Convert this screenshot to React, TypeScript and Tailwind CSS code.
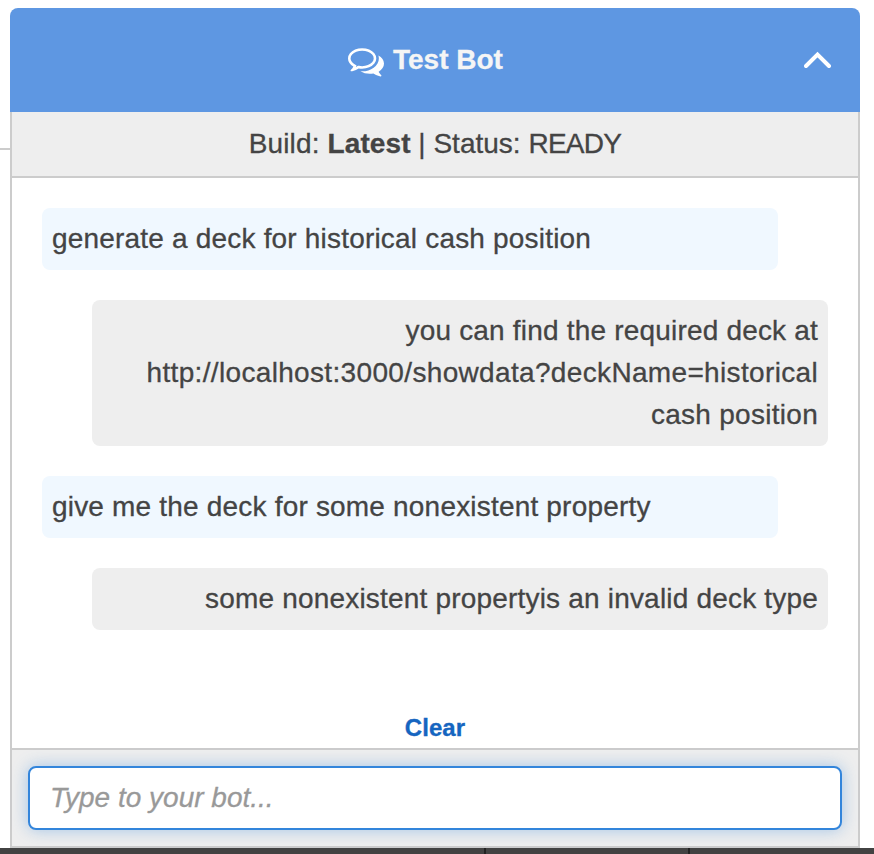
type MessageProps = { from: "user" | "bot"; children: React.ReactNode };

function Message({ from, children }: MessageProps) {
  return from === "user" ? (
    <div className="mr-[50px] rounded-lg bg-[#f0f8ff] p-2.5 tracking-[0.19px]">{children}</div>
  ) : (
    <div className="ml-[50px] rounded-lg bg-[#eeeeee] p-2.5 text-right tracking-[0.19px]">{children}</div>
  );
}

function CommentsIcon() {
  return (
    <svg className="mt-px h-9 w-9" viewBox="0 0 1792 1792" fill="#fff">
      <path d="M704 384q-153 0-286 52t-211.5 141-78.5 191q0 82 53 158t149 132l97 56-35 84q34-20 62-39l44-31 53 10q78 14 153 14 153 0 286-52t211.5-141 78.5-191-78.5-191-211.5-141-286-52zm0-128q191 0 353.5 68.5t256.5 186.5 94 257-94 257-256.5 186.5-353.5 68.5q-86 0-176-16-124 88-278 128-36 9-86 16h-3q-11 0-20.5-8t-11.5-21q-1-3-1-6.5t.5-6.5 2-6l2.5-5 3.5-5.5 4-5 4.5-5 4-4.5q5-6 23-25t26-29.5 22.5-29 25-38.5 20.5-44q-124-72-195-177t-71-224q0-139 94-257t256.5-186.5 353.5-68.5zm822 1169q10 24 20.5 44t25 38.5 22.5 29 26 29.5 23 25q1 1 4 4.5t4.5 5 4 5 3.5 5.5l2.5 5 2 6 .5 6.5-1 6.5q-3 14-13 22t-22 7q-50-7-86-16-154-40-278-128-90 16-176 16-271 0-472-132 58 4 88 4 161 0 309-45t264-129q125-92 192-212t67-254q0-77-23-152 129 71 204 178t75 230q0 120-71 224.5t-195 176.5z" />
    </svg>
  );
}

export default function App() {
  return (
    <div className="flex h-[854px] w-[874px] flex-col overflow-hidden bg-white pt-2 font-['Liberation_Sans',Arial,sans-serif] text-[28px] leading-[42px] text-[#444444] [-webkit-text-stroke-width:0.3px]">
      <div className="flex">
        <div className="mt-[140px] h-0.5 w-2.5 bg-[#cccccc]" />
        <div className="flex h-[840px] w-[850px] flex-col">
          <header className="flex h-[104px] shrink-0 items-center rounded-t-lg bg-[#5e97e2] pr-7">
            <div className="ml-[338px] flex flex-1 items-center gap-[9px]">
              <CommentsIcon />
              <span className="text-[28px] font-bold text-[#f5f5f5]">Test Bot</span>
            </div>
            <svg className="h-[18px] w-7 [-webkit-text-stroke-width:0]" viewBox="0 0 28 18" fill="none" stroke="#fff" strokeWidth="4">
              <path d="M2 15 13.5 3.5 25 15" strokeLinecap="round" />
            </svg>
          </header>
          <div className="flex flex-1 flex-col border-x-2 border-b-2 border-[#cccccc]">
            <div className="h-[66px] border-b-2 border-[#cccccc] bg-[#eeeeee] pt-[11px] text-center whitespace-nowrap">
              <span className="tracking-[0.15px]">Build: </span>
              <b className="tracking-[0.1px]">Latest</b> | Status: <span className="tracking-[-0.7px]">READY</span>
            </div>
            <main className="flex h-[570px] flex-col gap-[30px] px-[30px] pt-[30px]">
              <Message from="user">generate a deck for historical cash position</Message>
              <Message from="bot">
                you can find the required deck at
                <br />
                <span className="tracking-[0.34px]">http://localhost:3000/showdata?deckName=historical</span>
                <br />
                <span className="tracking-[0.28px]">cash position</span>
              </Message>
              <Message from="user">give me the deck for some nonexistent property</Message>
              <Message from="bot">some nonexistent propertyis an invalid deck type</Message>
              <button className="mt-auto -mb-px self-center text-[24px] font-bold tracking-[0.1px] text-[#1565c0]">Clear</button>
            </main>
            <footer className="flex-1 border-t-2 border-[#cccccc] bg-[#eeeeee] p-4">
              <input
                className="h-16 w-full rounded-lg border-2 border-[#3385db] bg-white px-5 shadow-[0_0_16px_rgba(51,133,219,0.4)] outline-none placeholder:text-[#999999] placeholder:italic"
                placeholder="Type to your bot..."
              />
            </footer>
          </div>
        </div>
      </div>
      <div className="flex h-1.5 shrink-0 bg-[#424242]">
        <div className="ml-[484px] w-0.5 bg-[#222222]" />
        <div className="ml-[202px] w-0.5 bg-[#222222]" />
      </div>
    </div>
  );
}
